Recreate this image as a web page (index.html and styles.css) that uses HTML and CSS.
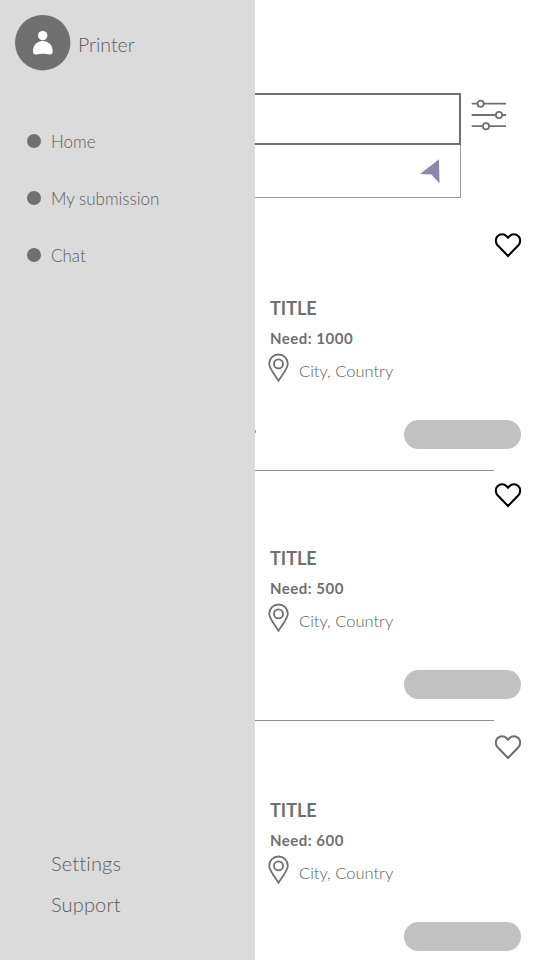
FILE: index.html
```
<!DOCTYPE html>
<html lang="en">
<head>
<meta charset="utf-8">
<title>Printer</title>
<link rel="stylesheet" href="styles.css">
</head>
<body>
<svg width="0" height="0" class="defs">
  <symbol id="heart" viewBox="0 0 28 26"><path d="M14 24 3.600 13.300C1.300 10.800 1.200 6.700 3.500 4.300 6 1.600 10.200 1.600 12.600 4.200L14 5.700 15.400 4.200C17.800 1.600 22 1.600 24.500 4.300 26.800 6.700 26.700 10.800 24.400 13.300Z" fill="none" stroke="currentColor" stroke-width="2"/></symbol>
  <symbol id="pin" viewBox="0 0 22 30"><path d="M10.500 27.800C7.500 23 1.200 15.500 1.200 10.800A9.300 9.300 0 0 1 19.800 10.800C19.800 15.500 13.500 23 10.500 27.800Z" fill="none" stroke="currentColor" stroke-width="1.800"/><circle cx="10.500" cy="10.900" r="4.500" fill="none" stroke="currentColor" stroke-width="1.900"/></symbol>
</svg>
<div class="screen">
  <aside class="sidebar">
    <header class="profile">
      <svg class="avatar" viewBox="0 0 56 56"><circle cx="27.700" cy="27.700" r="27.700" fill="#707070"/><circle cx="27.700" cy="20.600" r="4.700" fill="#fff"/><path d="M18 36C18 30.300 22.200 26 27.800 26S37.700 30.300 37.700 36C37.700 38.300 37 39.400 35.200 39.400 32 39.400 30 38.800 27.800 38.800S24 39.400 20.500 39.400C18.700 39.400 18 38.300 18 36Z" fill="#fff"/></svg>
      <span class="name">Printer</span>
    </header>
    <nav class="menu">
      <a class="item"><i class="dot"></i><span class="home">Home</span></a>
      <a class="item"><i class="dot"></i><span class="submission">My submission</span></a>
      <a class="item"><i class="dot"></i><span class="chat">Chat</span></a>
    </nav>
    <footer class="links"><a class="settings">Settings</a><a class="support">Support</a></footer>
  </aside>
  <main class="content">
    <div class="search">
      <div class="fields">
        <div class="field field-main"></div>
        <div class="field field-location"><svg class="arrow" viewBox="0 0 22 26"><path d="M1 15 20 .3 20.500 24.500 12.500 15.500Z" fill="#8d88aa"/></svg></div>
      </div>
      <svg class="filter" viewBox="0 0 36 34" fill="#fff" stroke="#707070" stroke-width="1.800"><path d="M.7 5.700H35M.7 17H35M.7 28.200H35"/><circle cx="9.600" cy="5.700" r="3.100"/><circle cx="28" cy="17" r="3.100"/><circle cx="15" cy="28.200" r="3.100"/></svg>
    </div>
    <section class="cards">
      <article class="card">
        <svg class="heart saved"><use href="#heart"/></svg>
        <h2>TITLE</h2><p class="need">Need: 1000</p>
        <div class="place"><svg class="pin"><use href="#pin"/></svg><span>City, Country</span></div>
        <div class="button"></div><i class="tick"></i>
      </article>
      <article class="card">
        <svg class="heart saved"><use href="#heart"/></svg>
        <h2>TITLE</h2><p class="need">Need: 500</p>
        <div class="place"><svg class="pin"><use href="#pin"/></svg><span>City, Country</span></div>
        <div class="button"></div>
      </article>
      <article class="card last">
        <svg class="heart"><use href="#heart"/></svg>
        <h2>TITLE</h2><p class="need">Need: 600</p>
        <div class="place"><svg class="pin"><use href="#pin"/></svg><span>City, Country</span></div>
        <div class="button"></div>
      </article>
    </section>
  </main>
</div>
</body>
</html>
```
FILE: styles.css
```
* { box-sizing: border-box; }
body { margin: 0; background: #fff; color: #707070; font-family: Lato, "Open Sans", sans-serif; font-variant-ligatures: none; overflow: hidden; }
svg { display: block; flex: none; }
.defs { position: absolute; }
.screen { display: grid; grid-template-columns: 255px 285px; height: 960px; overflow: hidden; }
.sidebar { display: flex; flex-direction: column; background: #dbdbdb; color: #5c5c5c; font-weight: 300; white-space: nowrap; }
.profile { display: flex; align-items: center; gap: 7px; padding: 15px 0 0 15px; }
.avatar { width: 56px; height: 56px; }
.name { font-size: 19.500px; line-height: 24px; padding-top: 3px; }
.menu { display: flex; flex-direction: column; gap: 33px; padding: 58px 0 0 27px; font-size: 17px; line-height: 24px; }
.item { display: flex; align-items: center; gap: 10px; height: 24px; }
.dot { width: 14px; height: 14px; border-radius: 50%; background: #707070; }
.item span { padding-top: 1px; }
.links { display: flex; flex-direction: column; gap: 13px; margin-top: auto; padding: 0 0 55px 51px; font-size: 20px; line-height: 28px; letter-spacing: .15px; }
.content { min-width: 0; }
.search { display: flex; gap: 10px; padding-top: 93px; height: 221px; }
.fields { width: 206px; }
.field-main { height: 52px; border: solid #707070; border-width: 2px 2px 2px 0; }
.field-location { display: flex; justify-content: flex-end; padding: 14px 19px 0 0; height: 53px; border: solid #999; border-width: 0 1px 1px 0; }
.arrow { width: 22px; height: 26px; }
.filter { width: 36px; height: 34px; margin-top: 5px; }
.card { position: relative; display: flex; flex-direction: column; height: 250px; padding: 11px 19px 0 13px; }
.card::after { content: ""; width: 239px; height: 1px; margin: auto 0 0 -13px; background: #909090; flex: none; }
.card.last { margin-top: 2px; }
.card.last::after { display: none; }
.heart { width: 28px; height: 26px; align-self: flex-end; margin-right: -1px; }
.saved { color: #000; }
h2 { margin: 38px 0 0 2px; font-size: 18px; font-weight: 700; line-height: 24px; }
.need { margin: 8px 0 0 2px; font-size: 15px; font-weight: 700; line-height: 20px; letter-spacing: .5px; }
.place { display: flex; gap: 9px; height: 30px; margin-top: 5px; color: #5c5c5c; font-size: 16.500px; font-weight: 300; line-height: 20px; }
.place span { padding-top: 8px; }
.pin { width: 22px; height: 30px; color: #707070; }
.button { width: 117px; height: 29px; margin: 37px 0 0; align-self: flex-end; border-radius: 15px; background: #c1c1c1; flex: none; }
.tick { position: absolute; left: 0; top: 209px; width: 1px; height: 3px; background: #999; }
```
